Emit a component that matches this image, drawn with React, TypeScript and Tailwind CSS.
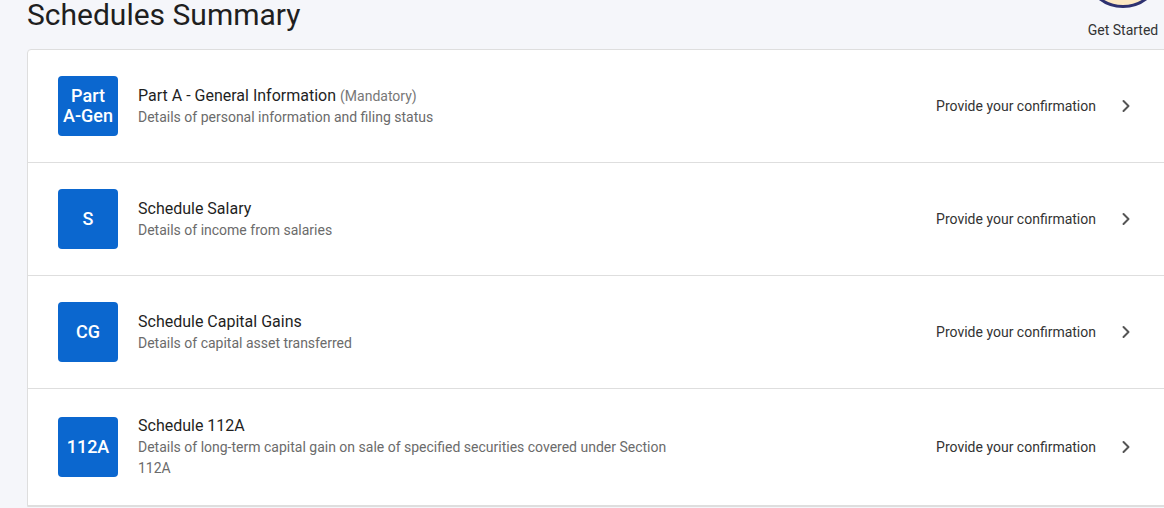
import { ChevronRight } from 'lucide-react';

interface Schedule {
  code: string[];
  title: string;
  note?: string;
  detail: string;
}

const schedules: Schedule[] = [
  {
    code: ['Part', 'A-Gen'],
    title: 'Part A - General Information',
    note: '(Mandatory)',
    detail: 'Details of personal information and filing status',
  },
  { code: ['S'], title: 'Schedule Salary', detail: 'Details of income from salaries' },
  { code: ['CG'], title: 'Schedule Capital Gains', detail: 'Details of capital asset transferred' },
  {
    code: ['112A'],
    title: 'Schedule 112A',
    detail: 'Details of long-term capital gain on sale of specified securities covered under Section 112A',
  },
];

function ScheduleRow({ item }: { item: Schedule }) {
  return (
    <div className="flex min-h-[112px] items-center border-b border-[#dedede] py-[26px] pl-[30px] pr-[40px]">
      <div className="flex h-[60px] w-[60px] shrink-0 flex-col items-center justify-center rounded-[4px] bg-[#0b67cf] text-[18px] font-medium leading-[20px] text-white">
        {item.code.map((line) => (
          <span key={line}>{line}</span>
        ))}
      </div>
      <div className="ml-[20px] max-w-[540px]">
        <div className="text-[16px] leading-[22px] text-[#1f1f1f]">
          {item.title}
          {item.note && <span className="ml-[4px] text-[14px] text-[#777]">{item.note}</span>}
        </div>
        <div className="text-[14px] leading-[21px] text-[#6b6b6b]">{item.detail}</div>
      </div>
      <div className="ml-auto flex items-center gap-[20px]">
        <span className="text-[14px] text-[#333]">Provide your confirmation</span>
        <ChevronRight size={20} strokeWidth={2.4} className="text-[#555]" />
      </div>
    </div>
  );
}

export default function App() {
  return (
    <div className="h-[508px] w-[1164px] overflow-hidden bg-[#f5f6fa] font-['Roboto',sans-serif]">
      <div className="flex h-[49px] items-start justify-between pl-[27px] pr-[1px]">
        <h1 className="text-[30px] font-normal leading-[30px] text-[#1f1f1f]">Schedules Summary</h1>
        <div className="flex flex-col items-center">
          <div className="-mt-[72px] h-[80px] w-[80px] rounded-full border-[3px] border-[#2e3170] bg-[#fde8c2]" />
          <span className="mt-[12px] text-[14px] leading-[20px] text-[#333]">Get Started</span>
        </div>
      </div>
      <div className="ml-[27px] w-[1150px] rounded-tl-[4px] border border-[#dedede] bg-white">
        {schedules.map((item) => (
          <ScheduleRow key={item.title} item={item} />
        ))}
      </div>
    </div>
  );
}
